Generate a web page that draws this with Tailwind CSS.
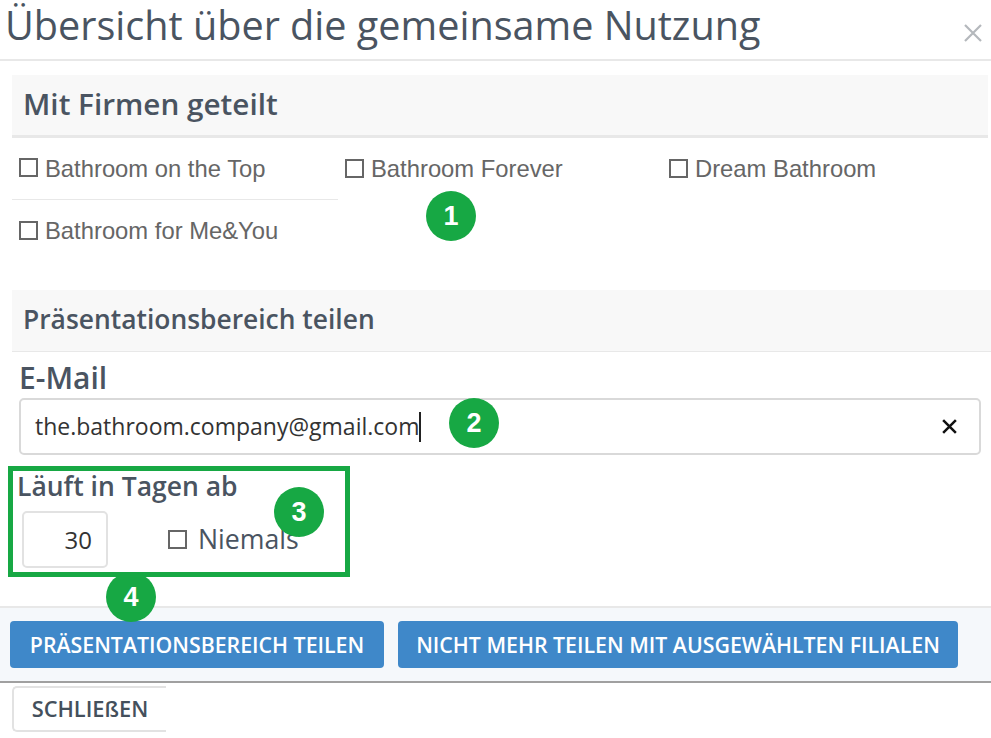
<!DOCTYPE html>
<html lang="de">
<head>
<meta charset="utf-8">
<script src="https://cdn.jsdelivr.net/npm/@tailwindcss/browser@4"></script>
<title>Übersicht</title>
</head>
<body class="bg-white">
<div class="relative w-[991px] h-[738px] overflow-hidden bg-white font-['Open_Sans',sans-serif] text-[#4a5461]">
  <header class="h-[61px] border-b-2 border-[#e8e8e8] flex justify-between pl-[5px] pr-[8px]">
    <h1 class="text-[39.6px] leading-[50px] whitespace-nowrap">Übersicht über die gemeinsame Nutzung</h1>
    <svg class="mt-[23px] w-[20px] h-[20px]" viewBox="0 0 20 20" fill="none" stroke="#b4b8bc" stroke-width="2.2"><path d="M2 2l16 16M18 2L2 18"/></svg>
  </header>

  <section class="ml-[12px] mr-[3px] mt-[14px]">
    <h2 class="h-[63px] bg-[#f8f8f8] border-b-[3px] border-[#e8e8e8] px-[11px] text-[29.7px] leading-[58px] font-semibold">Mit Firmen geteilt</h2>
    <div class="grid grid-cols-[333px_324px_1fr] font-['Liberation_Sans',sans-serif] text-[23.8px] text-[#666]">
      <label class="h-[62px] w-[326px] border-b border-[#e8e8e8] pl-[7px] flex items-center gap-[7px]">
        <span class="w-[19px] h-[19px] border-2 border-[#666] -mt-[2px]"></span>Bathroom on the Top
      </label>
      <label class="h-[62px] flex items-center gap-[7px]">
        <span class="w-[19px] h-[19px] border-2 border-[#666] -mt-[2px]"></span>Bathroom Forever
      </label>
      <label class="h-[62px] flex items-center gap-[7px]">
        <span class="w-[19px] h-[19px] border-2 border-[#666] -mt-[2px]"></span>Dream Bathroom
      </label>
      <label class="h-[62px] w-[326px] pl-[7px] flex items-center gap-[7px]">
        <span class="w-[19px] h-[19px] border-2 border-[#666] -mt-[2px]"></span>Bathroom for Me&amp;You
      </label>
    </div>
  </section>

  <section class="ml-[12px] mt-[28px]">
    <h2 class="h-[62px] bg-[#f8f8f8] border-b border-[#e8e8e8] px-[11px] text-[26.4px] leading-[58px] font-semibold">Präsentationsbereich teilen</h2>
    <div class="pl-[7px] pr-[10px]">
      <label class="block text-[30px] leading-[36px] mt-[8px] font-semibold">E-Mail</label>
      <div class="mt-[2px] h-[57px] border-2 border-[#d9d9d9] rounded-[5px] flex items-center justify-between pl-[14px] pr-[21px] text-[23px] text-[#333]">
        <span class="flex items-center">the.bathroom.company@gmail.com<span class="w-[2px] h-[30px] bg-[#222]"></span></span>
        <svg class="w-[17px] h-[17px]" viewBox="0 0 16 16" fill="none" stroke="#111" stroke-width="2.4"><path d="M2 2l12 12M14 2L2 14"/></svg>
      </div>
      <div class="text-[26.5px] leading-[34px] mt-[14px] -ml-[2px] font-semibold">Läuft in Tagen ab</div>
      <div class="flex items-center mt-[8px] ml-[3px]">
        <div class="w-[86px] h-[57px] border-2 border-[#e2e2e2] rounded-[5px] flex items-center justify-end pr-[14px] text-[24px] text-[#333]">30</div>
        <span class="ml-[60px] w-[19px] h-[19px] border-2 border-[#666]"></span>
        <span class="ml-[11px] text-[26.7px]">Niemals</span>
      </div>
    </div>
  </section>

  <footer class="mt-[38px] h-[77px] bg-[#f5f8fb] border-t-2 border-b-2 border-t-[#e8e8e8] border-b-[#a0a0a0] flex gap-[14px] pl-[10px] pt-[13px]">
    <button class="w-[374px] h-[47px] bg-[#3f88c9] rounded-[4px] text-white text-[21.3px] font-semibold whitespace-nowrap">PRÄSENTATIONSBEREICH TEILEN</button>
    <button class="w-[560px] h-[47px] bg-[#3f88c9] rounded-[4px] text-white text-[21.3px] font-semibold whitespace-nowrap">NICHT MEHR TEILEN MIT AUSGEWÄHLTEN FILIALEN</button>
  </footer>
  <div class="pl-[12px] pt-[3px]">
    <button class="w-[154px] h-[46px] border-2 border-r-0 border-[#e2e2e2] rounded-l-[5px] text-[21.8px] font-semibold text-[#44505c] whitespace-nowrap">SCHLIEßEN</button>
  </div>

  <div class="absolute left-[426px] top-[191px] w-[50px] h-[50px] rounded-full bg-[#17a844] text-white flex items-center justify-center font-['Liberation_Sans',sans-serif] font-bold text-[27px]">1</div>
  <div class="absolute left-[449px] top-[398px] w-[50px] h-[50px] rounded-full bg-[#17a844] text-white flex items-center justify-center font-['Liberation_Sans',sans-serif] font-bold text-[27px]">2</div>
  <div class="absolute left-[8px] top-[466px] w-[342px] h-[111px] border-[5px] border-[#17a844]"></div>
  <div class="absolute left-[274px] top-[487px] w-[50px] h-[50px] rounded-full bg-[#17a844] text-white flex items-center justify-center font-['Liberation_Sans',sans-serif] font-bold text-[27px]">3</div>
  <div class="absolute left-[106px] top-[572px] w-[50px] h-[50px] rounded-full bg-[#17a844] text-white flex items-center justify-center font-['Liberation_Sans',sans-serif] font-bold text-[27px]">4</div>
</div>
</body>
</html>
